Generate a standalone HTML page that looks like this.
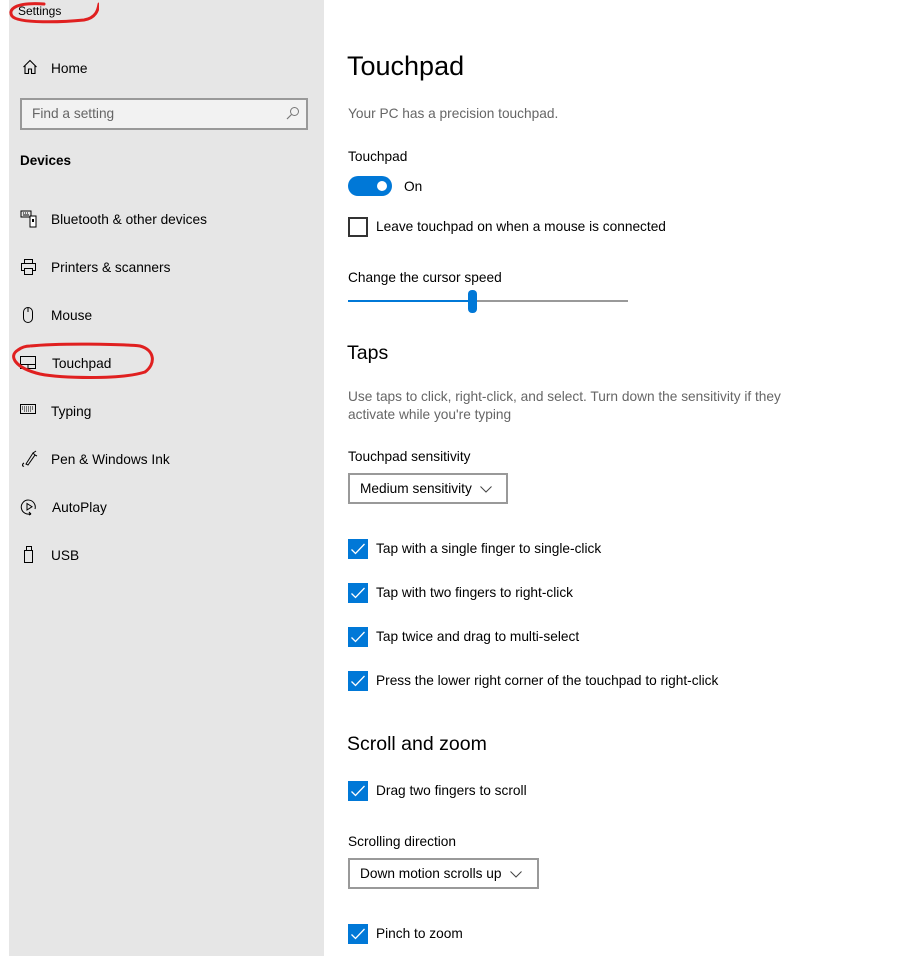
<!DOCTYPE html><html><head><meta charset="utf-8"><style>
*{margin:0;padding:0;box-sizing:border-box}
body{width:906px;height:956px;background:#fff;font-family:"Liberation Sans",sans-serif;color:#000;position:relative;overflow:hidden;font-size:13.7px}
.a{position:absolute;white-space:nowrap}
#side{position:absolute;left:9px;top:0;width:315px;height:956px;background:#e6e6e6}
.nav{position:absolute;left:51px;font-size:13.7px;margin-top:1px}
.ic{position:absolute;left:20px}
.cb{position:absolute;left:348px;width:20px;height:20px;background:#0078d7}
.cb svg{position:absolute;left:2px;top:2px}
.lbl{position:absolute;left:376px;font-size:13.7px;margin-top:1px}
.dd{position:absolute;left:348px;height:31px;border:2px solid #999;padding:0 10px;font-size:13.7px;line-height:28px}
.dd svg{margin-left:8px;vertical-align:middle}
.h2{position:absolute;left:347px;font-size:19.5px;margin-top:1px}
</style></head><body>
<div id="side"></div>
<div class="a" style="left:18px;top:4px;font-size:12px">Settings</div>
<svg class="a" style="left:4px;top:0" width="95" height="28"><path d="M40 4 C10 2 4 10 8 16 C14 24 60 22 80 20 C92 18 94 10 95 4" fill="none" stroke="#e02020" stroke-width="3" stroke-linecap="round"/></svg>
<svg class="ic" style="left:22px;top:59px" width="16" height="16" viewBox="0 0 16 16"><path d="M1.5 8 L8 1.5 L14.5 8 M3 6.5 V14.5 H6.5 V10 H9.5 V14.5 H13 V6.5" fill="none" stroke="#000" stroke-width="1.1"/></svg>
<div class="nav" style="top:60px">Home</div>
<div class="a" style="left:20px;top:98px;width:288px;height:32px;border:2px solid #999;background:#f2f2f2"></div>
<div class="a" style="left:32px;top:106px;color:#666">Find a setting</div>
<svg class="a" style="left:286px;top:106px" width="14" height="14" viewBox="0 0 14 14"><circle cx="8.5" cy="5.5" r="4" fill="none" stroke="#777" stroke-width="1"/><path d="M5.5 8.5 L1 13" stroke="#777" stroke-width="1.2"/></svg>
<div class="a" style="left:20px;top:153px;font-weight:bold;font-size:13.5px">Devices</div>
<svg class="ic" style="top:210px" width="18" height="18" viewBox="0 0 18 18"><rect x="1" y="1" width="10" height="6" fill="none" stroke="#000"/><path d="M3 3h1M5 3h1M7 3h1M3 5h6" stroke="#000"/><rect x="10" y="6" width="6" height="11" fill="#fff" stroke="#000"/><rect x="12" y="9" width="2" height="3" fill="#000"/></svg>
<div class="nav" style="top:211px">Bluetooth &amp; other devices</div>
<svg class="ic" style="top:258px" width="18" height="18" viewBox="0 0 18 18"><rect x="4.5" y="1.5" width="8" height="4" fill="none" stroke="#000"/><rect x="1.5" y="5.5" width="14" height="7" fill="none" stroke="#000"/><rect x="4.5" y="10.5" width="8" height="6" fill="#e6e6e6" stroke="#000"/></svg>
<div class="nav" style="top:259px">Printers &amp; scanners</div>
<svg class="ic" style="top:306px" width="18" height="18" viewBox="0 0 18 18"><rect x="3.5" y="1.5" width="9" height="15" rx="4.5" fill="none" stroke="#000"/><path d="M8 2v4" stroke="#000"/></svg>
<div class="nav" style="top:307px">Mouse</div>
<svg class="ic" style="top:356px" width="18" height="14" viewBox="0 0 18 14"><rect x="0.5" y="0.5" width="15" height="12" fill="none" stroke="#000"/><path d="M0.5 8.5h15M8 8.5v4" stroke="#000"/></svg>
<div class="nav" style="top:355px;left:52px">Touchpad</div>
<svg class="a" style="left:10px;top:342px" width="145" height="40"><path d="M20 4 C50 1 110 2 130 4 C145 8 146 22 135 30 C110 38 50 36 30 32 C5 26 -2 14 8 8 C12 5 16 4 20 4" fill="none" stroke="#e02020" stroke-width="3"/></svg>
<svg class="ic" style="top:404px" width="18" height="12" viewBox="0 0 18 12"><rect x="0.5" y="0.5" width="15" height="9" fill="none" stroke="#000"/><path d="M2 3h12M2 5h12M4 7h8" stroke="#000" stroke-dasharray="1 1"/></svg>
<div class="nav" style="top:403px">Typing</div>
<svg class="ic" style="top:450px" width="18" height="18" viewBox="0 0 18 18"><path d="M6 14 L13 3 L15 5 L8 15 Z M4 16 C2 17 2 14 4 13 M13 3 L16 1 M15 5 L17 6" fill="none" stroke="#000"/></svg>
<div class="nav" style="top:451px">Pen &amp; Windows Ink</div>
<svg class="ic" style="top:498px" width="18" height="18" viewBox="0 0 18 18"><path d="M11 15.5 A7 7 0 1 1 15 11" fill="none" stroke="#000"/><path d="M7 5.5 V12 L12 8.75 Z" fill="none" stroke="#000"/><path d="M9 14 L11 16 M11 16 L9 17" stroke="#000"/></svg>
<div class="nav" style="top:499px;left:52px">AutoPlay</div>
<svg class="ic" style="top:546px;left:23px" width="12" height="18" viewBox="0 0 12 18"><rect x="3.5" y="0.5" width="5" height="4" fill="none" stroke="#000"/><rect x="1.5" y="4.5" width="8" height="12" fill="none" stroke="#000"/></svg>
<div class="nav" style="top:547px">USB</div>

<div class="a" style="left:347px;top:51px;font-size:27px">Touchpad</div>
<div class="a" style="left:348px;top:106px;color:#666">Your PC has a precision touchpad.</div>
<div class="a" style="left:348px;top:149px">Touchpad</div>
<div class="a" style="left:348px;top:176px;width:44px;height:20px;border-radius:10px;background:#0078d7"></div>
<div class="a" style="left:377px;top:181px;width:10px;height:10px;border-radius:5px;background:#fff"></div>
<div class="a" style="left:404px;top:179px">On</div>
<div class="a" style="left:348px;top:217px;width:20px;height:20px;border:2px solid #333"></div>
<div class="lbl" style="top:218px">Leave touchpad on when a mouse is connected</div>
<div class="a" style="left:348px;top:270px">Change the cursor speed</div>
<div class="a" style="left:348px;top:300px;width:125px;height:2px;background:#0078d7"></div>
<div class="a" style="left:473px;top:300px;width:155px;height:2px;background:#999"></div>
<div class="a" style="left:468px;top:290px;width:9px;height:23px;border-radius:4px;background:#0078d7"></div>
<div class="h2" style="top:341px">Taps</div>
<div class="a" style="left:348px;top:388px;color:#666;line-height:18px">Use taps to click, right-click, and select. Turn down the sensitivity if they<br>activate while you're typing</div>
<div class="a" style="left:348px;top:449px">Touchpad sensitivity</div>
<div class="dd" style="top:473px;width:160px">Medium sensitivity<svg width="12" height="7"><path d="M0.5 0.5 L6 6 L11.5 0.5" fill="none" stroke="#444"/></svg></div>
<div class="cb" style="top:539px"><svg width="16" height="16"><path d="M1.5 8.5 L5.5 12.5 L14.5 3" fill="none" stroke="#fff" stroke-width="1.3"/></svg></div>
<div class="lbl" style="top:540px">Tap with a single finger to single-click</div>
<div class="cb" style="top:583px"><svg width="16" height="16"><path d="M1.5 8.5 L5.5 12.5 L14.5 3" fill="none" stroke="#fff" stroke-width="1.3"/></svg></div>
<div class="lbl" style="top:584px">Tap with two fingers to right-click</div>
<div class="cb" style="top:627px"><svg width="16" height="16"><path d="M1.5 8.5 L5.5 12.5 L14.5 3" fill="none" stroke="#fff" stroke-width="1.3"/></svg></div>
<div class="lbl" style="top:628px">Tap twice and drag to multi-select</div>
<div class="cb" style="top:671px"><svg width="16" height="16"><path d="M1.5 8.5 L5.5 12.5 L14.5 3" fill="none" stroke="#fff" stroke-width="1.3"/></svg></div>
<div class="lbl" style="top:672px">Press the lower right corner of the touchpad to right-click</div>
<div class="h2" style="top:732px">Scroll and zoom</div>
<div class="cb" style="top:781px"><svg width="16" height="16"><path d="M1.5 8.5 L5.5 12.5 L14.5 3" fill="none" stroke="#fff" stroke-width="1.3"/></svg></div>
<div class="lbl" style="top:782px">Drag two fingers to scroll</div>
<div class="a" style="left:348px;top:834px">Scrolling direction</div>
<div class="dd" style="top:858px;width:191px">Down motion scrolls up<svg width="12" height="7"><path d="M0.5 0.5 L6 6 L11.5 0.5" fill="none" stroke="#444"/></svg></div>
<div class="cb" style="top:924px"><svg width="16" height="16"><path d="M1.5 8.5 L5.5 12.5 L14.5 3" fill="none" stroke="#fff" stroke-width="1.3"/></svg></div>
<div class="lbl" style="top:925px">Pinch to zoom</div>
</body></html>
